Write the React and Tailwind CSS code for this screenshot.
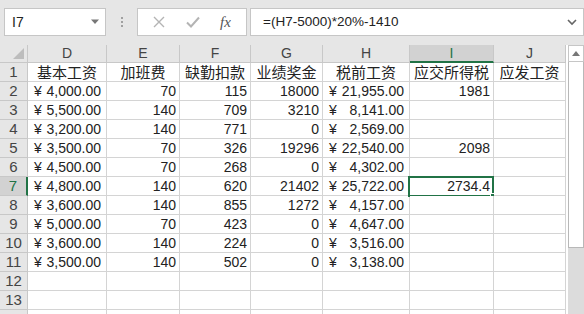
import React from 'react';

const cols = [
  { key: 'D', w: 'w-[79px]' },
  { key: 'E', w: 'w-[73px]' },
  { key: 'F', w: 'w-[71px]' },
  { key: 'G', w: 'w-[72px]' },
  { key: 'H', w: 'w-[87px]' },
  { key: 'I', w: 'w-[84px]' },
  { key: 'J', w: 'w-[72px]' },
];

const headers = ['基本工资', '加班费', '缺勤扣款', '业绩奖金', '税前工资', '应交所得税', '应发工资'];

const rows = [
  ['4,000.00', 70, 115, 18000, '21,955.00', 1981],
  ['5,500.00', 140, 709, 3210, '8,141.00', ''],
  ['3,200.00', 140, 771, 0, '2,569.00', ''],
  ['3,500.00', 70, 326, 19296, '22,540.00', 2098],
  ['4,500.00', 70, 268, 0, '4,302.00', ''],
  ['4,800.00', 140, 620, 21402, '25,722.00', '2734.4'],
  ['3,600.00', 140, 855, 1272, '4,157.00', ''],
  ['5,000.00', 70, 423, 0, '4,647.00', ''],
  ['3,600.00', 140, 224, 0, '3,516.00', ''],
  ['3,500.00', 140, 502, 0, '3,138.00', ''],
];

const font = { fontFamily: '"Liberation Sans", "Noto Sans CJK SC", sans-serif' };

function Money({ v }) {
  return (
    <div className="flex h-full items-center justify-between pl-[6px] pr-[5px] text-[14px] leading-none">
      <span>¥</span>
      <span>{v}</span>
    </div>
  );
}

function Cell({ w, children, right, center, className = '' }) {
  return (
    <div
      className={`${w} h-[19px] shrink-0 border-r border-b border-[#d4d4d4] bg-white relative ${className}`}
    >
      <div
        className={`flex h-full items-center px-[3px] leading-none whitespace-nowrap ${
          right ? 'justify-end' : center ? 'justify-center' : ''
        }`}
      >
        {children}
      </div>
    </div>
  );
}

function RowHead({ n, active }) {
  return (
    <div
      className={`w-[28px] h-[19px] shrink-0 flex items-center justify-center border-b border-[#c8c8c8] text-[15px] ${
        active ? 'bg-[#d2d2d2] text-[#217346] border-r-2 border-r-[#217346]' : 'text-[#444] border-r border-r-[#c8c8c8]'
      }`}
    >
      {n}
    </div>
  );
}

export default function App() {
  return (
    <div className="w-[584px] h-[314px] overflow-hidden bg-[#e6e6e6] text-[#222] text-[14px]" style={font}>
      {/* Formula toolbar */}
      <div className="h-[45px] flex items-start pt-[8px] pl-[4px]">
        <div className="w-[102px] h-[28px] bg-white border border-[#c6c6c6] flex items-center justify-between pl-[7px] pr-[5px]">
          <span className="text-[14px] text-[#222]">I7</span>
          <svg width="10" height="6" viewBox="0 0 10 6">
            <path d="M1 0.5 L9 0.5 L5 5 Z" fill="#777" />
          </svg>
        </div>
        <div className="w-[31px] h-[28px] flex flex-col items-center justify-center gap-[2px]">
          <div className="w-[2px] h-[2px] bg-[#a0a0a0]" />
          <div className="w-[2px] h-[2px] bg-[#a0a0a0]" />
          <div className="w-[2px] h-[2px] bg-[#a0a0a0]" />
        </div>
        <div className="w-[110px] h-[28px] bg-white border border-[#c6c6c6] flex items-center">
          <svg width="12" height="12" viewBox="0 0 12 12" className="ml-[15px]">
            <path d="M1 1 L11 11 M11 1 L1 11" stroke="#b4b4b4" strokeWidth="1.4" />
          </svg>
          <svg width="14" height="12" viewBox="0 0 14 12" className="ml-[21px]">
            <path d="M1 6.5 L5 10.5 L13 1.5" stroke="#b4b4b4" strokeWidth="2" fill="none" />
          </svg>
          <span
            className="ml-[20px] text-[15px] italic text-[#555]"
            style={{ fontFamily: '"Liberation Serif", serif' }}
          >
            fx
          </span>
        </div>
        <div className="ml-[3px] w-[334px] h-[28px] bg-white border border-[#c6c6c6] flex items-center justify-between pl-[12px] pr-[6px]">
          <span className="text-[13.5px] text-[#222]">=(H7-5000)*20%-1410</span>
          <svg width="10" height="7" viewBox="0 0 10 7">
            <path d="M1 1 L5 5 L9 1" stroke="#666" strokeWidth="1.6" fill="none" />
          </svg>
        </div>
      </div>

      {/* Sheet */}
      <div className="flex">
        <div className="flex flex-col">
          {/* column headers */}
          <div className="flex h-[18px] text-[#444] text-[14px]">
            <div className="w-[28px] h-[18px] border-r border-b border-[#c8c8c8] relative">
              <svg width="11" height="11" viewBox="0 0 11 11" className="absolute right-[3px] bottom-[3px]">
                <path d="M11 0 L11 11 L0 11 Z" fill="#bdbdbd" />
              </svg>
            </div>
            {cols.map((c) => (
              <div
                key={c.key}
                className={`${c.w} h-[18px] shrink-0 flex items-center justify-center border-r ${
                  c.key === 'I'
                    ? 'bg-[#d2d2d2] text-[#217346] border-b-2 border-b-[#217346] border-r-[#c8c8c8]'
                    : 'border-b border-[#c8c8c8]'
                }`}
              >
                {c.key}
              </div>
            ))}
          </div>

          {/* row 1 */}
          <div className="flex">
            <RowHead n={1} />
            {cols.map((c, i) => (
              <Cell key={c.key} w={c.w} center>
                <span className="text-[15px]">{headers[i]}</span>
              </Cell>
            ))}
          </div>

          {rows.map((r, idx) => {
            const n = idx + 2;
            return (
              <div className="flex" key={n}>
                <RowHead n={n} active={n === 7} />
                <div className="w-[79px] h-[19px] shrink-0 border-r border-b border-[#d4d4d4] bg-white">
                  <Money v={r[0]} />
                </div>
                <Cell w="w-[73px]" right>{r[1]}</Cell>
                <Cell w="w-[71px]" right>{r[2]}</Cell>
                <Cell w="w-[72px]" right>{r[3]}</Cell>
                <div className="w-[87px] h-[19px] shrink-0 border-r border-b border-[#d4d4d4] bg-white">
                  <Money v={r[4]} />
                </div>
                <Cell w="w-[84px]" right>
                  {r[5]}
                  {n === 7 && (
                    <div className="absolute -left-[2px] -top-[1px] -right-[1px] -bottom-[2px] border-2 border-[#217346]">
                      <div className="absolute -right-[4px] -bottom-[4px] w-[6px] h-[6px] bg-[#217346] border border-white" />
                    </div>
                  )}
                </Cell>
                <Cell w="w-[72px]" />
              </div>
            );
          })}

          {[12, 13, 0].map((n) => (
            <div className="flex" key={n}>
              <RowHead n={n || ''} />
              {cols.map((c) => (
                <Cell key={c.key} w={c.w} />
              ))}
            </div>
          ))}
        </div>

        {/* vertical scrollbar */}
        <div className="w-[2px] bg-white" />
        <div className="w-[16px] flex flex-col bg-[#dcdcdc]">
          <div className="h-[17px] bg-white border border-[#c6c6c6] flex items-center justify-center">
            <svg width="8" height="5" viewBox="0 0 8 5">
              <path d="M0 5 L4 0 L8 5 Z" fill="#777" />
            </svg>
          </div>
          <div className="h-[186px] bg-white border-x border-b border-[#b8b8b8]" />
        </div>
      </div>
    </div>
  );
}
